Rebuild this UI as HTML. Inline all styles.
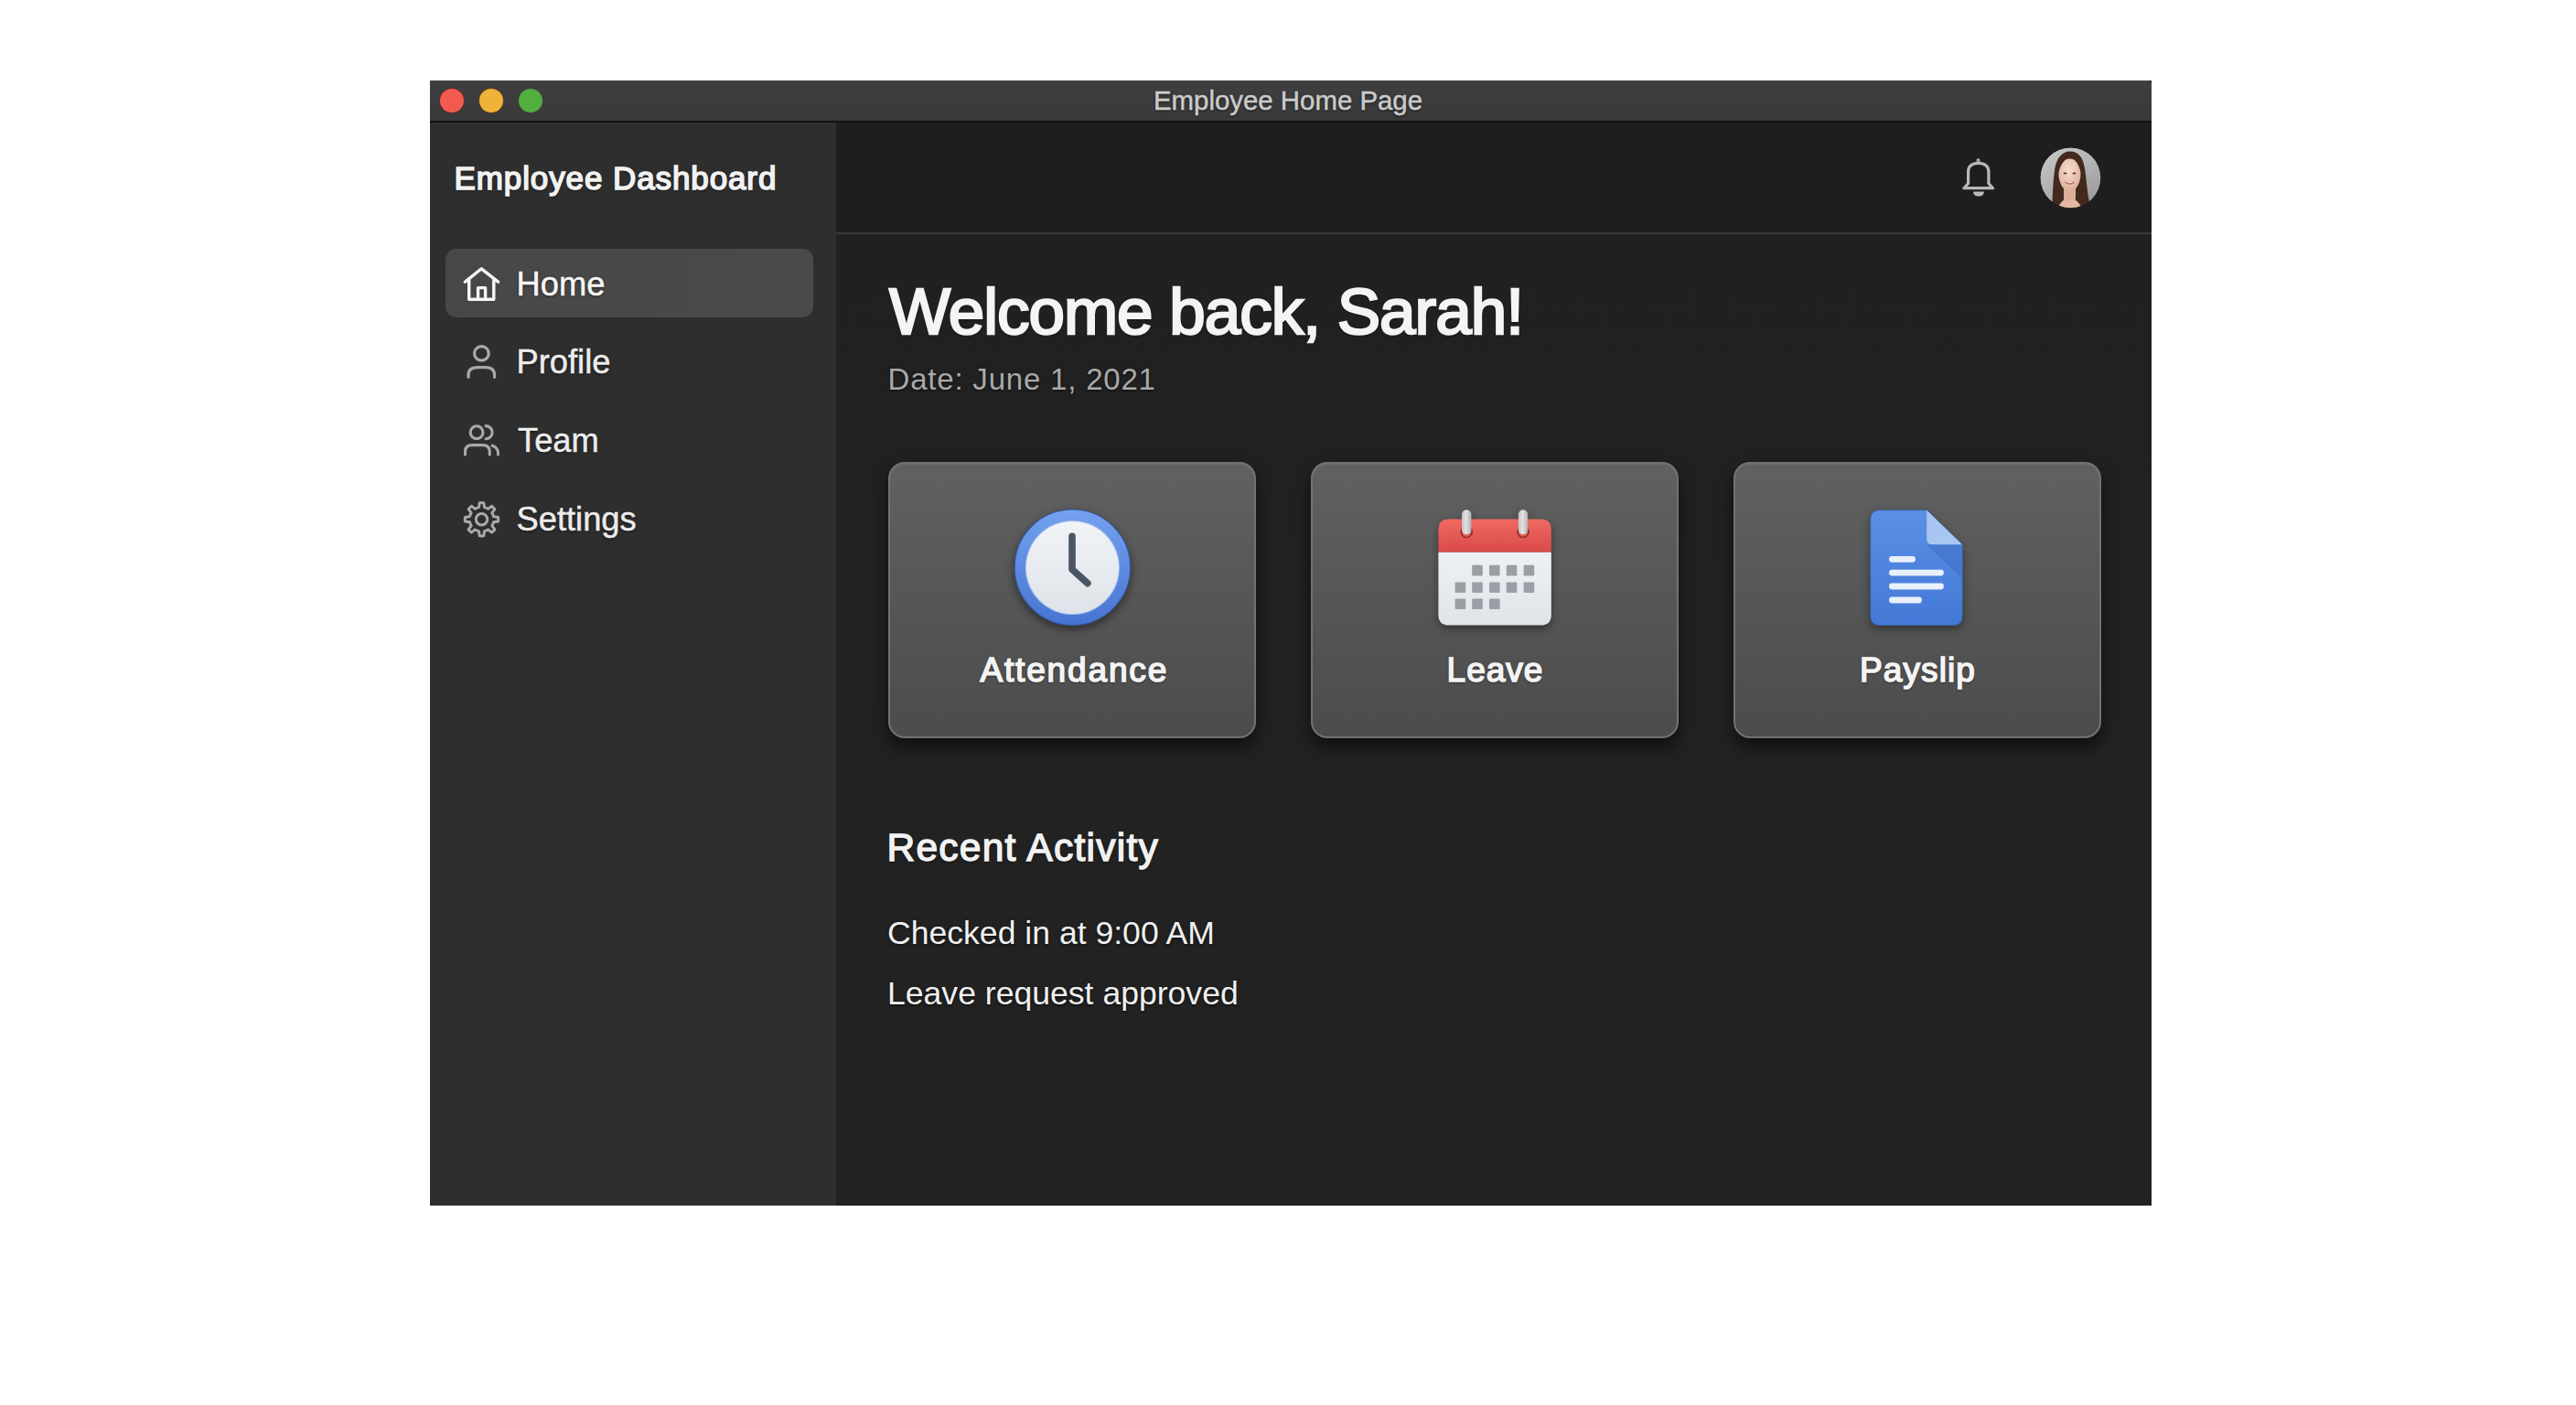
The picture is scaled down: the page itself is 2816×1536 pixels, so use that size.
<!DOCTYPE html>
<html><head><meta charset="utf-8">
<style>
html,body{margin:0;padding:0;width:2816px;height:1536px;background:#fff;overflow:hidden;font-family:"Liberation Sans",sans-serif;}
.a{position:absolute;}
.t{position:absolute;white-space:nowrap;line-height:1;text-shadow:0 1px 3px rgba(0,0,0,0.7);}
#win{left:470px;top:88px;width:1882px;height:1230px;background:#1f1f1f;overflow:hidden;}
#titlebar{left:470px;top:88px;width:1882px;height:44px;background:linear-gradient(#3f3f41,#39393a);border-radius:0 4px 0 0;}
#tbline{left:470px;top:132px;width:1882px;height:2px;background:#111;}
#sidebar{left:470px;top:134px;width:444px;height:1184px;background:#2e2e2e;}
#main{left:914px;top:134px;width:1438px;height:1184px;background:linear-gradient(#202020,#222222 60%,#222222);}
#hdr{left:914px;top:134px;width:1438px;height:120px;background:#1e1e1e;}
#hdrline{left:914px;top:254px;width:1438px;height:2px;background:#3a3a3a;}
.dot{position:absolute;width:26px;height:26px;border-radius:50%;top:96.5px;}
.card{position:absolute;top:504.5px;width:398px;height:298px;border-radius:18px;border:2px solid #727272;background:linear-gradient(#616161,#575757 45%,#4c4c4c);box-shadow:0 10px 18px rgba(0,0,0,0.55), inset 0 1px 0 rgba(255,255,255,0.08);}
.ct{font-size:37px;color:#f4f4f4;-webkit-text-stroke:1.6px #f4f4f4;}
.nav{font-size:36.3px;color:#ececec;-webkit-text-stroke:0.5px #ececec;}
</style></head><body>
<div id="win" class="a"></div>
<div id="titlebar" class="a"></div>
<div id="tbline" class="a"></div>
<div class="dot" style="left:480.8px;background:#f25a4f;box-shadow:0 0 0 1px #5a2e28;"></div>
<div class="dot" style="left:524px;background:#efb33a;box-shadow:0 0 0 1px #553e20;"></div>
<div class="dot" style="left:567px;background:#52ae3d;"></div>
<div class="t" style="left:1261px;top:95px;font-size:29.4px;color:#cbcbcb;-webkit-text-stroke:0.5px #cbcbcb;">Employee Home Page</div>

<div id="sidebar" class="a"></div>
<div id="main" class="a"></div>
<div id="hdr" class="a"></div>
<div id="hdrline" class="a"></div>

<div class="t" style="left:496.5px;top:176.5px;font-size:35px;color:#f2f2f2;letter-spacing:0.9px;-webkit-text-stroke:1.6px #f2f2f2;">Employee Dashboard</div>

<div class="a" style="left:487px;top:272px;width:402px;height:75px;border-radius:12px;background:linear-gradient(90deg,#484747,#4b4a4a);"></div>

<svg class="a" style="left:0;top:0;" width="2816" height="1536" viewBox="0 0 2816 1536">
  <!-- home -->
  <g fill="none" stroke="#f6f6f6" stroke-width="3.4" stroke-linecap="round" stroke-linejoin="round">
    <path d="M508.4 308.2 L526.3 293.8 L544.5 308.2"/>
    <path d="M512.7 305 V327.3 H539.8 V305"/>
    <path d="M522.6 327 V314.6 H530.6 V327"/>
  </g>
  <!-- profile -->
  <g fill="none" stroke="#a9a9a9" stroke-width="3.2" stroke-linecap="round">
    <circle cx="526.4" cy="386.4" r="7.8"/>
    <path d="M512 412.3 V410 C512 404 516 401.6 522 401.6 H531 C537 401.6 540.6 404 540.6 410 V412.3"/>
  </g>
  <!-- team -->
  <g fill="none" stroke="#a9a9a9" stroke-width="3.1" stroke-linecap="round">
    <circle cx="521.1" cy="472.7" r="6.9"/>
    <path d="M531 465.6 A7 7 0 0 1 531.2 479.7"/>
    <path d="M508.5 497 V494 C508.5 489 511.5 486.6 516 486.6 H527.5 C532.5 486.6 535.3 489 535.3 494 V497"/>
    <path d="M538.2 487.2 C542 488.5 544.5 491.5 544.5 495.5 V497"/>
  </g>
  <!-- settings -->
  <g fill="none" stroke="#a9a9a9" stroke-width="3" stroke-linejoin="round" transform="translate(526.5 567.7)">
    <path d="M-3.03 -13.05 L-2.28 -18.06 A18.2 18.2 0 0 1 2.28 -18.06 L3.03 -13.05 A13.4 13.4 0 0 1 7.09 -11.37 L11.15 -14.38 A18.2 18.2 0 0 1 14.38 -11.15 L11.37 -7.09 A13.4 13.4 0 0 1 13.05 -3.03 L18.06 -2.28 A18.2 18.2 0 0 1 18.06 2.28 L13.05 3.03 A13.4 13.4 0 0 1 11.37 7.09 L14.38 11.15 A18.2 18.2 0 0 1 11.15 14.38 L7.09 11.37 A13.4 13.4 0 0 1 3.03 13.05 L2.28 18.06 A18.2 18.2 0 0 1 -2.28 18.06 L-3.03 13.05 A13.4 13.4 0 0 1 -7.09 11.37 L-11.15 14.38 A18.2 18.2 0 0 1 -14.38 11.15 L-11.37 7.09 A13.4 13.4 0 0 1 -13.05 3.03 L-18.06 2.28 A18.2 18.2 0 0 1 -18.06 -2.28 L-13.05 -3.03 A13.4 13.4 0 0 1 -11.37 -7.09 L-14.38 -11.15 A18.2 18.2 0 0 1 -11.15 -14.38 L-7.09 -11.37 A13.4 13.4 0 0 1 -3.03 -13.05 Z"/>
    <circle cx="0" cy="0" r="6.2"/>
  </g>
  <!-- bell -->
  <g fill="none" stroke="#b8b8b8" stroke-width="3.2" stroke-linejoin="round" stroke-linecap="round">
    <path d="M2151.6 200.5 V187.5 C2151.6 181.5 2156 178.4 2162.75 178.4 C2169.5 178.4 2173.9 181.5 2173.9 187.5 V200.5 L2178.6 205.7 H2146.9 Z"/>
    <circle cx="2162.5" cy="175.3" r="1.3" stroke-width="1.5"/>
  </g>
  <path d="M2157 209.6 H2168.9 C2168.9 213 2166 214.8 2162.95 214.8 C2160 214.8 2157 213 2157 209.6 Z" fill="#b8b8b8"/>
</svg>

<div class="t nav" style="left:564.5px;top:293.3px;color:#f6f6f6;-webkit-text-stroke:0.5px #f6f6f6;">Home</div>
<div class="t nav" style="left:564.5px;top:378.2px;">Profile</div>
<div class="t nav" style="left:566px;top:464.2px;">Team</div>
<div class="t nav" style="left:564.5px;top:550.2px;">Settings</div>

<!-- avatar -->
<svg class="a" style="left:2229px;top:160px;" width="68" height="68" viewBox="0 0 68 68">
  <defs>
    <clipPath id="avc"><circle cx="34.4" cy="34.4" r="33.4"/></clipPath>
    <linearGradient id="avbg" x1="0" y1="0" x2="0.6" y2="1"><stop offset="0" stop-color="#cbcbcb"/><stop offset="0.6" stop-color="#b0b0b0"/><stop offset="1" stop-color="#9c9c9c"/></linearGradient>
    <radialGradient id="avface" cx="0.45" cy="0.35" r="0.7"><stop offset="0" stop-color="#f6dccf"/><stop offset="1" stop-color="#dcac98"/></radialGradient>
  </defs>
  <g clip-path="url(#avc)">
    <rect width="68" height="68" fill="url(#avbg)"/>
    <path d="M14 70 C15 55 15 40 17 26 C19 12 26 5.5 34 5.5 C43 5.5 48 12 50 24 C52 38 53 55 57 70 Z" fill="#43291d"/>
    <path d="M20 70 C22 62 27 57 33 56.5 C40 57 45 62 48 70 Z" fill="#e2b8a4"/>
    <path d="M27 44 H40 V58 Q33.5 61 27 58 Z" fill="#dcae9a"/>
    <path d="M21.5 30 C21.5 19 27 13.5 33.5 13.5 C40 13.5 45.5 19 45.5 30 C45.5 41 40 49 33.5 49 C27 49 21.5 41 21.5 30 Z" fill="url(#avface)"/>
    <path d="M21 27 C21.5 17 27 11.5 34 11.5 C29 13.5 24 18 21.5 28 Z" fill="#43291d"/>
    <path d="M46 27 C45.5 17 40 11.5 34 11.5 C39 13.5 43 18 45.5 28 Z" fill="#43291d"/>
    <ellipse cx="28.5" cy="29.5" rx="2" ry="1.1" fill="#5a3a2e"/>
    <ellipse cx="38.5" cy="29.5" rx="2" ry="1.1" fill="#5a3a2e"/>
    <path d="M28.5 39 Q33.5 43 38.5 39" stroke="#b86e62" stroke-width="1.6" fill="#f4e6e0"/>
  </g>
  <circle cx="34.4" cy="34.4" r="33.4" fill="none" stroke="#151515" stroke-width="1"/>
</svg>

<div class="t" style="left:972px;top:304.5px;font-size:71px;color:#f4f4f4;letter-spacing:-1px;-webkit-text-stroke:2.4px #f4f4f4;">Welcome back, Sarah!</div>
<div class="t" style="left:970.5px;top:398px;font-size:33px;color:#a9a9a9;letter-spacing:0.8px;">Date: June 1, 2021</div>

<div class="card" style="left:971px;"></div>
<div class="card" style="left:1433px;"></div>
<div class="card" style="left:1895px;"></div>

<!-- clock -->
<svg class="a" style="left:1090px;top:540px;filter:drop-shadow(0 4px 5px rgba(0,0,0,0.45));" width="170" height="170" viewBox="1090 540 170 170">
  <defs>
    <linearGradient id="clr" x1="0" y1="0" x2="0" y2="1"><stop offset="0" stop-color="#74a2ef"/><stop offset="1" stop-color="#4674d2"/></linearGradient>
    <linearGradient id="clf" x1="0" y1="0" x2="0" y2="1"><stop offset="0" stop-color="#f1f3f6"/><stop offset="1" stop-color="#dfe3e9"/></linearGradient>
  </defs>
  <circle cx="1172.4" cy="620.3" r="63.3" fill="url(#clr)" stroke="#34548f" stroke-width="1.2"/>
  <circle cx="1172.4" cy="620.5" r="51.6" fill="#9fbcec"/>
  <circle cx="1172.4" cy="620.5" r="50.6" fill="url(#clf)"/>
  <path d="M1172 586.3 V622.5 L1188.9 637.6" fill="none" stroke="#4b5563" stroke-width="7.6" stroke-linecap="round" stroke-linejoin="round"/>
</svg>

<!-- calendar -->
<svg class="a" style="left:1560px;top:550px;filter:drop-shadow(0 4px 5px rgba(0,0,0,0.4));" width="150" height="150" viewBox="1560 550 150 150">
  <defs>
    <linearGradient id="calr" x1="0" y1="0" x2="0" y2="1"><stop offset="0" stop-color="#ee6a62"/><stop offset="1" stop-color="#d94a48"/></linearGradient>
    <linearGradient id="pin" x1="0" y1="0" x2="1" y2="0"><stop offset="0" stop-color="#c4c4c4"/><stop offset="0.45" stop-color="#e2e2e2"/><stop offset="1" stop-color="#b0b0b0"/></linearGradient>
    <linearGradient id="calb" x1="0" y1="0" x2="0" y2="1"><stop offset="0" stop-color="#eef1f4"/><stop offset="1" stop-color="#dfe4e9"/></linearGradient>
  </defs>
  <path d="M1572.4 579 Q1572.4 567.4 1584 567.4 H1684.2 Q1695.8 567.4 1695.8 579 V603.7 H1572.4 Z" fill="url(#calr)"/>
  <path d="M1572.4 603.7 H1695.8 V672 Q1695.8 683.6 1684.2 683.6 H1584 Q1572.4 683.6 1572.4 672 Z" fill="url(#calb)"/>
  <circle cx="1603.2" cy="581.5" r="6" fill="none" stroke="#8a2e2e" stroke-width="1.6"/>
  <circle cx="1665" cy="581.5" r="6" fill="none" stroke="#8a2e2e" stroke-width="1.6"/>
  <rect x="1598" y="557.3" width="10.4" height="27" rx="5.2" fill="url(#pin)"/>
  <rect x="1659.8" y="557.3" width="10.4" height="27" rx="5.2" fill="url(#pin)"/>
  <g fill="#9b9fa5">
    <rect x="1609.2" y="617.8" width="11.6" height="11.6" rx="1"/><rect x="1628" y="617.8" width="11.6" height="11.6" rx="1"/><rect x="1646.7" y="617.8" width="11.6" height="11.6" rx="1"/><rect x="1665.6" y="617.8" width="11.6" height="11.6" rx="1"/>
    <rect x="1590.6" y="636.4" width="11.6" height="11.6" rx="1"/><rect x="1609.2" y="636.4" width="11.6" height="11.6" rx="1"/><rect x="1628" y="636.4" width="11.6" height="11.6" rx="1"/><rect x="1646.7" y="636.4" width="11.6" height="11.6" rx="1"/><rect x="1665.6" y="636.4" width="11.6" height="11.6" rx="1"/>
    <rect x="1590.6" y="654.5" width="11.6" height="11.6" rx="1"/><rect x="1609.2" y="654.5" width="11.6" height="11.6" rx="1"/><rect x="1628" y="654.5" width="11.6" height="11.6" rx="1"/>
  </g>
</svg>

<!-- document -->
<svg class="a" style="left:2030px;top:550px;filter:drop-shadow(0 4px 5px rgba(0,0,0,0.4));" width="130" height="150" viewBox="2030 550 130 150">
  <defs>
    <linearGradient id="docb" x1="0" y1="0" x2="0" y2="1"><stop offset="0" stop-color="#5b90e6"/><stop offset="1" stop-color="#4378d6"/></linearGradient>
  </defs>
  <path d="M2054.8 557.8 H2104.5 Q2106.2 557.8 2107.5 559 L2143.8 594 Q2145.2 595.4 2145.2 597.2 V673.5 Q2145.2 683.5 2135.2 683.5 H2054.8 Q2044.8 683.5 2044.8 673.5 V567.8 Q2044.8 557.8 2054.8 557.8 Z" fill="url(#docb)" stroke="#3a64b4" stroke-width="0.8"/>
  <path d="M2106.2 595.2 L2144.9 633 V595.2 Z" fill="#3e6cc4" opacity="0.5"/>
  <path d="M2106.2 557.7 L2144.9 595.2 H2112 Q2106.2 595.2 2106.2 589 Z" fill="#a9c5f1"/>
  <g stroke="#e8f0fc" stroke-width="6.8" stroke-linecap="round">
    <path d="M2068.4 611.3 H2090.6"/>
    <path d="M2068.4 626.1 H2121.5"/>
    <path d="M2068.4 641 H2121.5"/>
    <path d="M2068.4 656 H2097.5"/>
  </g>
</svg>

<div class="t ct" style="left:971px;width:402px;text-align:center;top:713.5px;letter-spacing:1.85px;text-indent:4.5px;">Attendance</div>
<div class="t ct" style="left:1433px;width:402px;text-align:center;top:713.5px;letter-spacing:1px;text-indent:1px;">Leave</div>
<div class="t ct" style="left:1895px;width:402px;text-align:center;top:713.5px;letter-spacing:1.1px;text-indent:1.1px;">Payslip</div>

<div class="t" style="left:969.5px;top:905.5px;font-size:42.5px;color:#f2f2f2;letter-spacing:1.25px;-webkit-text-stroke:1.4px #f2f2f2;">Recent Activity</div>
<div class="t" style="left:970px;top:1002.5px;font-size:35.6px;color:#f0f0f0;">Checked in at 9:00 AM</div>
<div class="t" style="left:970px;top:1069px;font-size:35.6px;color:#f0f0f0;">Leave request approved</div>
</body></html>
